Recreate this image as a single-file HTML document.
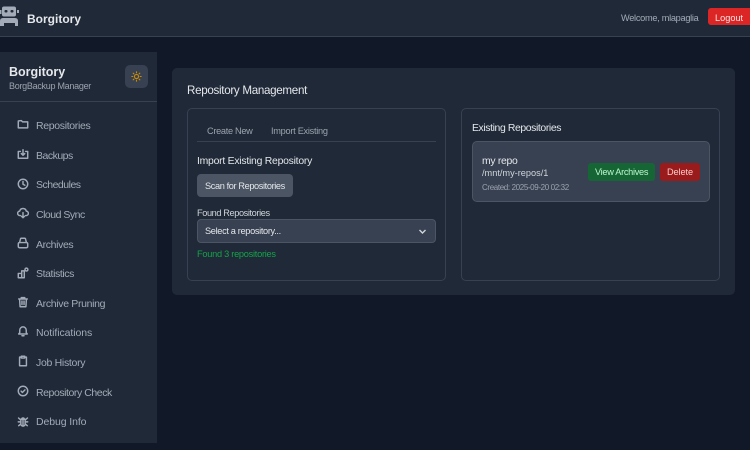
<!DOCTYPE html>
<html><head><meta charset="utf-8"><style>
*{box-sizing:border-box;margin:0;padding:0}
html,body{width:750px;height:450px;overflow:hidden;background:#111827;font-family:"Liberation Sans",sans-serif}
#w{position:absolute;left:0;top:0;width:750px;height:450px;filter:blur(.3px)}
.a{position:absolute;white-space:nowrap}
.box{position:absolute}
.nav{position:absolute;left:36px;font-size:10.5px;line-height:14px;color:#a3abb8;white-space:nowrap}
svg.i{position:absolute;left:17px;width:12px;height:12px;fill:none;stroke:#a3abb8;stroke-width:1.7;stroke-linecap:round;stroke-linejoin:round}
</style></head><body><div id="w">
<div class="box" style="left:0;top:0;width:750px;height:37px;background:#1f2937;border-bottom:1px solid #374151"></div>
<svg class="box" style="left:0;top:2px;width:20px;height:26px" viewBox="0 0 20 26" fill="#a3abb8"><rect x="2" y="4.500" width="14" height="10" rx="2"/><rect x="0" y="8" width="1.500" height="4"/><rect x="17" y="8" width="2" height="3"/><rect x="4.500" y="8" width="3" height="2.500" rx="1" fill="#1f2937"/><rect x="10.500" y="8" width="3" height="2.500" rx="1" fill="#1f2937"/><path d="M0 24v-5q0-3 3-3h12q3 0 3 3v5h-3v-3H4v3z"/></svg>
<div class="a" style="left:27px;top:11px;font-size:12px;line-height:16px;font-weight:bold;color:#e5e7eb">Borgitory</div>
<div class="a" style="left:621px;top:12px;font-size:9.200px;line-height:13px;letter-spacing:-.28px;color:#a3abb8">Welcome, mlapaglia</div>
<div class="box" style="left:708px;top:8px;width:42px;height:17px;background:#dc2626;border-radius:3px 0 0 3px"></div>
<div class="a" style="left:715px;top:12px;font-size:9.200px;line-height:13px;color:#fee2e2">Logout</div>

<div class="box" style="left:0;top:52px;width:157px;height:391px;background:#1f2937"></div>
<div class="box" style="left:0;top:101px;width:157px;height:1px;background:#374151"></div>
<div class="a" style="left:9px;top:64px;font-size:12.500px;line-height:16px;font-weight:bold;color:#e5e7eb">Borgitory</div>
<div class="a" style="left:9px;top:80px;font-size:9px;line-height:12px;letter-spacing:-.28px;color:#9ca3af">BorgBackup Manager</div>
<div class="box" style="left:125px;top:65px;width:23px;height:23px;background:#374151;border-radius:5px"></div>
<svg class="box" style="left:131px;top:71px;width:11px;height:11px;fill:none;stroke:#ca8a04;stroke-width:1.400;stroke-linecap:round" viewBox="0 0 14 14"><circle cx="7" cy="7" r="2.600"/><path d="M7 1v1.300M7 11.700V13M1 7h1.300M11.700 7H13M2.800 2.800l.9.900M10.300 10.300l.9.900M2.800 11.200l.9-.9M10.300 3.700l.9-.9"/></svg>

<svg class="i" style="top:118px" viewBox="0 0 14 14"><path d="M1.500 3.500v8h11v-7H6.500L5 3z"/></svg>
<div class="nav" style="top:119px;letter-spacing:-.33px">Repositories</div>
<svg class="i" style="top:148px" viewBox="0 0 14 14"><path d="M4 4H1.500v8h11V4H10M7 2v6M5 6.500l2 2 2-2"/></svg>
<div class="nav" style="top:149px;letter-spacing:-.5px">Backups</div>
<svg class="i" style="top:178px" viewBox="0 0 14 14"><circle cx="7" cy="7" r="5.500"/><path d="M7 4v3.300l2.200 1.200"/></svg>
<div class="nav" style="top:178px;letter-spacing:-.5px">Schedules</div>
<svg class="i" style="top:207px" viewBox="0 0 14 14"><path d="M4 10H3.500a2.600 2.600 0 0 1-.3-5.200 3.900 3.900 0 0 1 7.600 0A2.600 2.600 0 0 1 10.500 10H10M7 6.500v6M5.200 10.800 7 12.500l1.800-1.700"/></svg>
<div class="nav" style="top:208px;letter-spacing:-.5px">Cloud Sync</div>
<svg class="i" style="top:237px" viewBox="0 0 14 14"><path d="M1.500 8q0-1.500 1.500-1.500h8q1.500 0 1.500 1.500v3q0 1.500-1.500 1.500H3q-1.500 0-1.500-1.500zM3 6.500 4 2.500q.2-1 1-1h4q.8 0 1 1l1 4"/></svg>
<div class="nav" style="top:238px;letter-spacing:-.37px">Archives</div>
<svg class="i" style="top:267px" viewBox="0 0 14 14"><path d="M1.500 12.500V7.500h4v5zM5.500 12.500V4.500h3v8H5.500"/><circle cx="11" cy="3" r="1.700"/></svg>
<div class="nav" style="top:267px;letter-spacing:-.4px">Statistics</div>
<svg class="i" style="top:296px" viewBox="0 0 14 14"><path d="M2 3.500h10M5 3.500V1.800h4v1.700M3 3.500l.6 9h6.800l.6-9M5.800 6v4M8.200 6v4"/></svg>
<div class="nav" style="top:297px;letter-spacing:-.33px">Archive Pruning</div>
<svg class="i" style="top:325px" viewBox="0 0 14 14"><path d="M2 10.500h10l-1.200-1.500V6a3.800 3.800 0 0 0-7.600 0v3zM5.800 12.500h2.400"/></svg>
<div class="nav" style="top:326px;letter-spacing:-.08px">Notifications</div>
<svg class="i" style="top:355px" viewBox="0 0 14 14"><path d="M5 2.500H3v10h8v-10H9M5 1.500h4v2H5z"/></svg>
<div class="nav" style="top:356px;letter-spacing:-.3px">Job History</div>
<svg class="i" style="top:385px" viewBox="0 0 14 14"><circle cx="7" cy="7" r="5.500"/><path d="M4.800 7.200l1.500 1.500 3-3"/></svg>
<div class="nav" style="top:386px;letter-spacing:-.44px">Repository Check</div>
<svg class="i" style="top:415px" viewBox="0 0 14 14"><path d="M4.500 5h5v5.500a2.500 2.500 0 0 1-5 0zM5.500 5a1.500 1.500 0 0 1 3 0M7 5v8M1.800 3.500l2.700 2.500M12.200 3.500 9.500 6M1.500 8h3M9.500 8h3M2 12.500l2.500-2M12 12.500l-2.500-2"/></svg>
<div class="nav" style="top:415px;letter-spacing:-.1px">Debug Info</div>

<div class="box" style="left:172px;top:68px;width:563px;height:227px;background:#1f2937;border-radius:5px"></div>
<div class="a" style="left:187px;top:83px;font-size:11.600px;line-height:15px;letter-spacing:-.3px;color:#e5e7eb">Repository Management</div>

<div class="box" style="left:187px;top:108px;width:259px;height:173px;border:1px solid #374151;border-radius:5px"></div>
<div class="a" style="left:207px;top:125px;font-size:9.200px;line-height:13px;letter-spacing:-.3px;color:#9ca3af">Create New</div>
<div class="a" style="left:271px;top:125px;font-size:9.200px;line-height:13px;letter-spacing:-.27px;color:#9ca3af">Import Existing</div>
<div class="box" style="left:197px;top:141px;width:239px;height:1px;background:#374151"></div>
<div class="a" style="left:197px;top:155px;font-size:10.400px;line-height:14px;letter-spacing:-.24px;color:#e5e7eb">Import Existing Repository</div>
<div class="box" style="left:197px;top:174px;width:96px;height:23px;background:#4b5563;border-radius:4px"></div>
<div class="a" style="left:205px;top:180px;font-size:9.200px;line-height:13px;letter-spacing:-.38px;color:#e5e7eb">Scan for Repositories</div>
<div class="a" style="left:197px;top:207px;font-size:9.200px;line-height:13px;letter-spacing:-.39px;color:#d1d5db">Found Repositories</div>
<div class="box" style="left:197px;top:219px;width:239px;height:24px;background:#374151;border:1px solid #4b5563;border-radius:4px"></div>
<div class="a" style="left:205px;top:224px;font-size:9.200px;line-height:14px;letter-spacing:-.33px;color:#e5e7eb">Select a repository...</div>
<svg class="box" style="left:418px;top:227px;width:9px;height:9px;fill:none;stroke:#d1d5db;stroke-width:1.400" viewBox="0 0 9 9"><path d="M1.500 3l3 3 3-3"/></svg>
<div class="a" style="left:197px;top:248px;font-size:9.200px;line-height:13px;letter-spacing:-.25px;color:#16a34a">Found 3 repositories</div>

<div class="box" style="left:461px;top:108px;width:259px;height:173px;border:1px solid #374151;border-radius:5px"></div>
<div class="a" style="left:472px;top:122px;font-size:10.400px;line-height:14px;letter-spacing:-.38px;color:#e5e7eb">Existing Repositories</div>
<div class="box" style="left:472px;top:141px;width:238px;height:61px;background:#374151;border:1px solid #4b5563;border-radius:5px"></div>
<div class="a" style="left:482px;top:155px;font-size:10.400px;line-height:14px;letter-spacing:-.3px;color:#e5e7eb">my repo</div>
<div class="a" style="left:482px;top:167px;font-size:9.200px;line-height:13px;color:#d1d5db">/mnt/my-repos/1</div>
<div class="a" style="left:482px;top:182px;font-size:8px;line-height:12px;letter-spacing:-.37px;color:#9ca3af">Created: 2025-09-20 02:32</div>
<div class="box" style="left:588px;top:163px;width:67px;height:18px;background:#166534;border-radius:3px"></div>
<div class="a" style="left:595px;top:166px;font-size:9.200px;line-height:13px;letter-spacing:-.3px;color:#bbf7d0">View Archives</div>
<div class="box" style="left:660px;top:163px;width:40px;height:18px;background:#991b1b;border-radius:3px"></div>
<div class="a" style="left:667px;top:166px;font-size:9.200px;line-height:13px;letter-spacing:-.1px;color:#fecaca">Delete</div>
</div></body></html>
